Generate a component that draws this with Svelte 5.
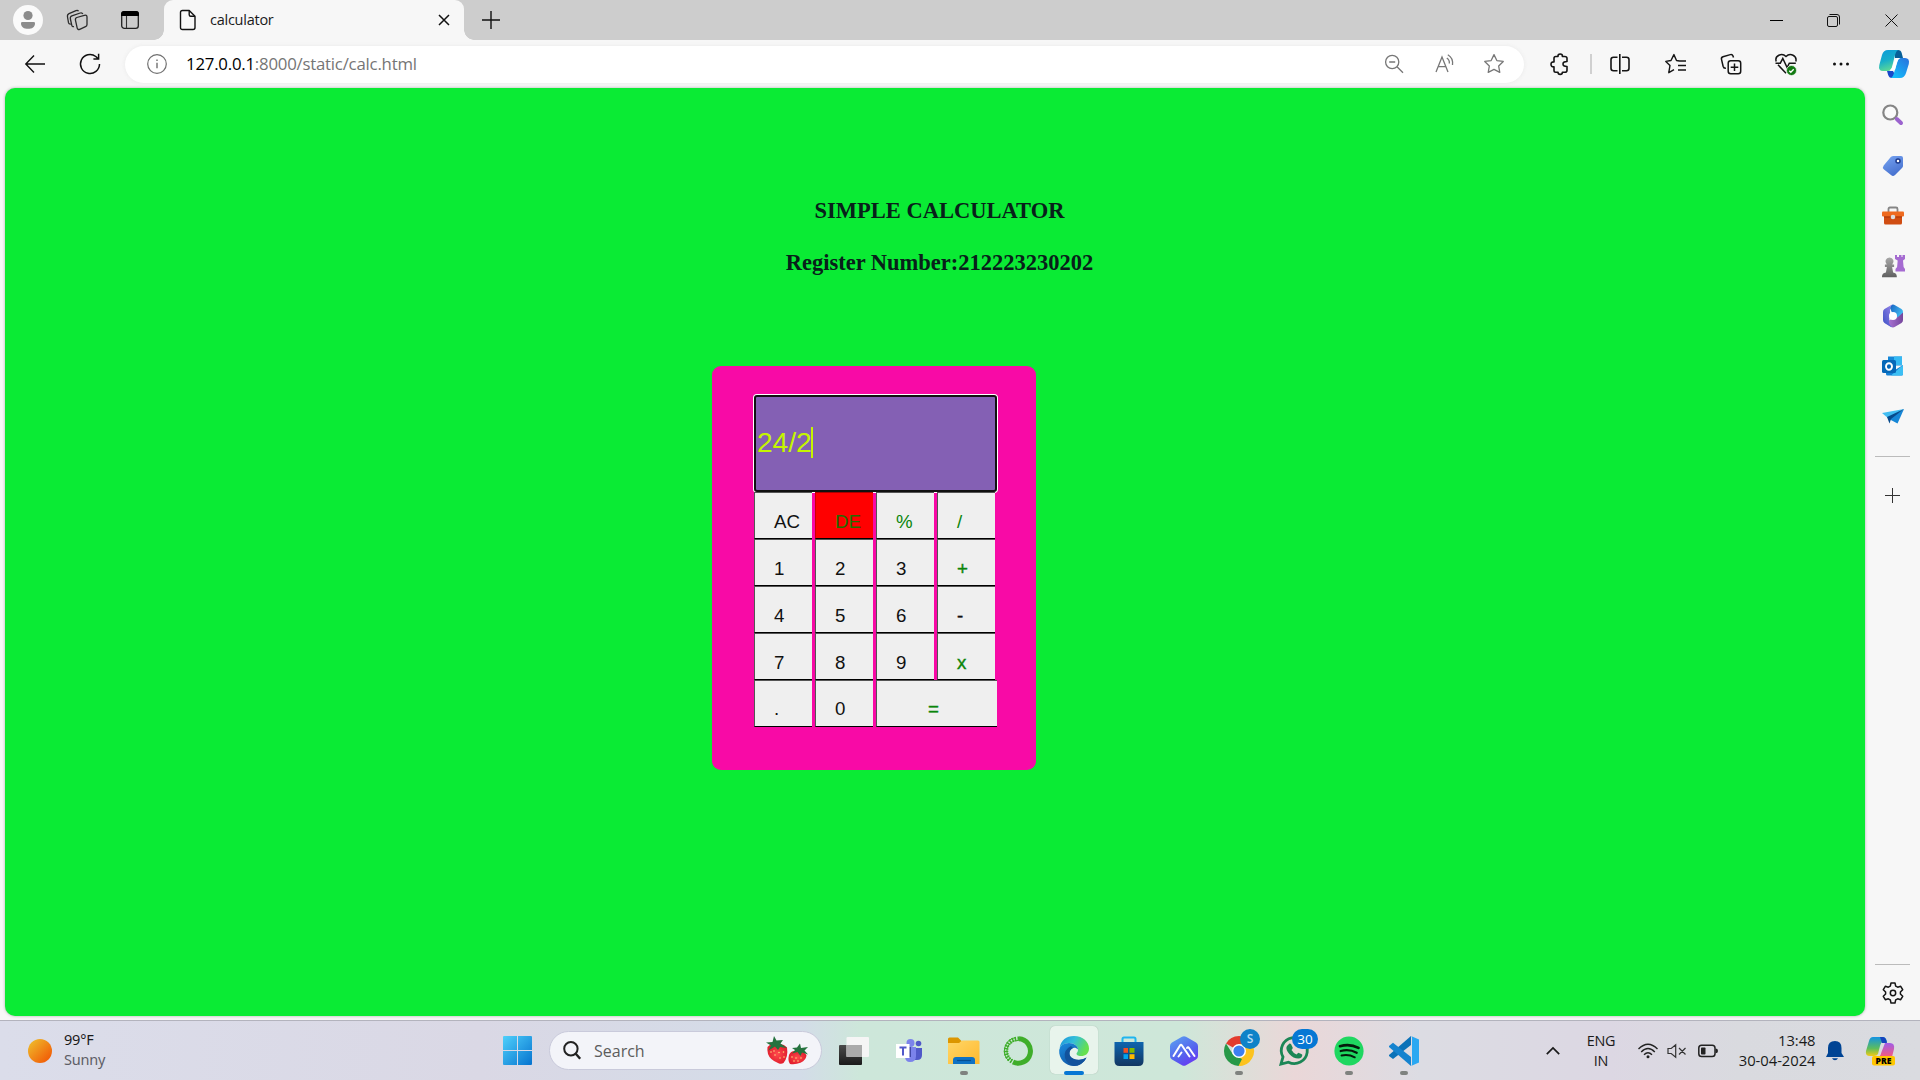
<script>
  const keys = [
    { t: 'AC' }, { t: 'DE', green: true, red: true }, { t: '%', green: true }, { t: '/', green: true },
    { t: '1' }, { t: '2' }, { t: '3' }, { t: '+', green: true, heavy: true },
    { t: '4' }, { t: '5' }, { t: '6' }, { t: '-', heavy: true },
    { t: '7' }, { t: '8' }, { t: '9' }, { t: 'x', green: true, heavy: true },
    { t: '.', last: true }, { t: '0', last: true }, { t: '=', green: true, wide: true, heavy: true, last: true }
  ];
</script>

<div class="screen">
  <header class="tabs">
    <div class="tools">
      <svg class="avatar" width="30" height="30" viewBox="0 0 30 30"><circle cx="15" cy="15" r="15" fill="#fafafa"/><circle cx="15" cy="10.5" r="4.6" fill="#8c8c8c"/><path d="M8 18.2q0-1.2 1.3-1.2h11.4q1.3 0 1.3 1.2c0 4-3 5.6-7 5.6s-7-1.600-7-5.600z" fill="#8c8c8c"/></svg>
      <svg width="24" height="24" viewBox="0 0 24 24" fill="none" stroke="#2b2b2b" stroke-width="1.3" stroke-linejoin="round"><path d="M10.800 9.500l7.500-2.200q2.500-.6 2.700 1.400v7.800q0 1.600-1.500 2.200l-5.800 2.600q-2 .7-2.500-1.200l-1.700-7.700q-.5-2.200 1.300-2.900z"/><path d="M8 18.600q-1.700.5-2.200-1.200L4.400 11q-.5-2.500 1.500-3.200l8.300-2.800q2-.6 2.600 1"/><path d="M4.800 16q-1.800.3-2.300-1.300L1.500 9q-.4-2.500 1.500-3.300l7-3q1.800-.7 2.500.6"/></svg>
      <svg width="18" height="18" viewBox="0 0 18 18"><rect x=".7" y=".7" width="16.600" height="16.600" rx="2.600" fill="none" stroke="#222" stroke-width="1.300"/><path d="M0 5V3q0-3 3-3h12q3 0 3 3v2z" fill="#000"/><path d="M5.500 5v12" stroke="#333" stroke-width="1.100"/></svg>
    </div>
    <div class="tab">
      <svg width="18" height="22" viewBox="0 0 18 22" fill="none" stroke="#111" stroke-width="1.400" stroke-linejoin="round"><path d="M3.500 1.500h6.700L16 7.300V18.500q0 2-2 2H3.500q-2 0-2-2v-15q0-2 2-2z"/><path d="M10.200 1.500v4.300q0 1.500 1.500 1.500H16"/></svg>
      <span>calculator</span>
      <svg class="x" width="12" height="12" viewBox="0 0 12 12" stroke="#111" stroke-width="1.500"><path d="M1 1l10 10M11 1L1 11"/></svg>
    </div>
    <svg class="new" width="18" height="18" viewBox="0 0 18 18" stroke="#111" stroke-width="1.400"><path d="M9 0v18M0 9h18"/></svg>
    <div class="win">
      <svg width="13" height="13" viewBox="0 0 13 13"><path d="M0 6.500h13" stroke="#000"/></svg>
      <svg width="13" height="13" viewBox="0 0 13 13" fill="none" stroke="#111"><rect x=".5" y="2.500" width="10" height="10" rx="1.500"/><path d="M2.500.5H10q2.500 0 2.500 2.500v7.500"/></svg>
      <svg width="13" height="13" viewBox="0 0 13 13" stroke="#111"><path d="M.5.5l12 12M12.500.5l-12 12"/></svg>
    </div>
  </header>

  <nav class="bar">
    <svg class="back" width="20" height="18" viewBox="0 0 20 18" fill="none" stroke="#111" stroke-width="1.400"><path d="M20 9H1M9 .5L.8 9 9 17.500"/></svg>
    <svg class="reload" width="22" height="22" viewBox="0 0 22 22" fill="none" stroke="#111" stroke-width="1.500"><path d="M20.500 11A9.500 9.500 0 1 1 16.800 3.500l2.400 2.300M19.600.8v5.200h-5.200"/></svg>
    <div class="address">
      <svg class="info" width="20" height="20" viewBox="0 0 20 20" fill="none" stroke="#707070" stroke-width="1.200"><circle cx="10" cy="10" r="9.300"/><path d="M10 8.800v5.400M10 5.600v1.500" stroke-width="1.400"/></svg>
      <p class="url"><b>127.0.0.1</b>:8000/static/calc.html</p>
      <div class="acts">
        <svg width="20" height="20" viewBox="0 0 20 20" fill="none" stroke="#777" stroke-width="1.300"><circle cx="8.200" cy="8" r="6.600"/><path d="M5.200 8h6M13 12.800l6 6"/></svg>
        <svg width="22" height="20" viewBox="0 0 22 20" fill="none" stroke="#777" stroke-width="1.300"><path d="M2 18L8 3l6 15M4.200 12.700h7.600M12.800 4q3 2 2.500 5.500M13.800.8q5.500 3 4.700 10.200"/></svg>
        <svg width="22" height="22" viewBox="0 0 24 24" fill="none" stroke="#777" stroke-width="1.400" stroke-linejoin="round"><path d="M12 1.800l3.100 6.400 7 1-5 5 1.200 7-6.300-3.300-6.300 3.300 1.200-7-5-5 7-1z"/></svg>
      </div>
    </div>
    <div class="right">
      <svg width="20" height="22" viewBox="0 0 20 22" fill="none" stroke="#151515" stroke-width="1.600" stroke-linejoin="round"><path d="M4 5.200q0-1.700 1.700-1.700H8q-.2-2.500 2.200-2.500t2.200 2.500h2.300q2.300 0 2.300 1.700v3.300q-4 0-4 2.500t4 2.500v3.700q0 2-2 2h-2.600q0 2.200-2.200 2.200T8 19.200H5.700Q4 19.200 4 17.500v-3.600q-3 .2-3-2.600 0-2.600 3-2.400z"/></svg>
      <i class="sep"></i>
      <svg width="20" height="20" viewBox="0 0 20 20" fill="none" stroke="#151515" stroke-width="1.600"><path d="M7.500 3.300h-4q-2.500 0-2.500 2.500v8.400q0 2.500 2.500 2.500h4M12 3.300h4.500q2.500 0 2.500 2.500v8.400q0 2.500-2.500 2.500H12M9.800 0v20"/></svg>
      <svg width="22" height="22" viewBox="0 0 22 22" fill="none" stroke="#151515" stroke-width="1.400" stroke-linejoin="round"><path d="M14.500 8l-3-.5L8.900 1.600 6 7.500l-5.200.9 4.200 4-1.200 7.300 5.200-3M13 8h8M13 12.500h8M13 17h8"/></svg>
      <svg width="22" height="22" viewBox="0 0 22 22" fill="none" stroke="#151515" stroke-width="1.500"><rect x="8.200" y="7.700" width="12.500" height="13" rx="2.500"/><path d="M14.500 10.500v7.500M10.700 14.200h7.600M13.500 4.500L13 3q-.7-2-2.700-1.400L3 3.700Q1 4.400 1.500 6.400l1.600 6.800q.6 2.300 2.800 1.900"/></svg>
      <svg width="24" height="24" viewBox="0 0 24 24" fill="none" stroke="#151515" stroke-width="1.500"><path d="M2.200 9.500C.4 3.800 7.800.2 12 4.500c4.200-4.300 11.300-.7 9.800 5M4 12.800l8 8.500M1.500 11.200h4.800l2.500-4.700 4.300 9 2.200-4.300h6.500"/><circle cx="17.500" cy="18.500" r="5" fill="#127a12" stroke="#f7f7f7" stroke-width=".7"/><path d="M15.300 18.700l1.500 1.500 2.900-3" stroke="#fff" stroke-width="1.300"/></svg>
      <svg width="18" height="6" viewBox="0 0 18 6" fill="#111"><circle cx="2.500" cy="3" r="1.500"/><circle cx="9" cy="3" r="1.500"/><circle cx="15.500" cy="3" r="1.500"/></svg>
      <svg class="cop" width="30" height="28" viewBox="0 0 30 28">
        <defs><linearGradient id="c1" x1="0" y1="0" x2=".3" y2="1"><stop offset="0" stop-color="#0c9bd9"/><stop offset=".55" stop-color="#18aeca"/><stop offset="1" stop-color="#58d69a"/></linearGradient><linearGradient id="c2" x1="1" y1="0" x2=".2" y2="1"><stop offset="0" stop-color="#2b70dc"/><stop offset="1" stop-color="#12bdfb"/></linearGradient></defs>
        <path d="M15 0h4q3 0 3.700 3l1.300 5h-8z" fill="#075f98"/><path d="M9 0h10q-2 1-3 5l-3 12q-1 4-4 4H4q-5 0-3.700-6L3 5q1.500-5 6-5z" fill="url(#c1)"/><path d="M8 21h6l4 7h-5q-3 0-4-3.500z" fill="#1748c9"/><path d="M21 28H12q2-1 3-5l3-11q1-4 4-4h4q5 0 3.800 6L27 23q-1.500 5-6 5z" fill="url(#c2)"/>
        <path d="M17 8h4q-2 1-3 5l-2 7h-5q2-1 3-5z" fill="#fff"/>
      </svg>
    </div>
  </nav>

  <div class="middle">
    <main class="page">
      <h3>SIMPLE CALCULATOR</h3>
      <h3>Register Number:212223230202</h3>
      <section class="calc">
        <div class="display"><span>24/2</span><i class="caret"></i></div>
        <div class="keys">
          {#each keys as k}
            <button class:green={k.green} class:red={k.red} class:wide={k.wide} class:heavy={k.heavy} class:last={k.last}>{k.t}</button>
          {/each}
        </div>
      </section>
    </main>

    <aside>
      <div><svg width="22" height="22" viewBox="0 0 22 22" fill="none"><circle cx="8.300" cy="8.500" r="7" fill="#fafafa" stroke="#858585" stroke-width="2.200"/><path d="M14.800 15l4.200 4" stroke="#9b63ce" stroke-width="4" stroke-linecap="round"/></svg></div>
      <div><svg width="22" height="22" viewBox="0 0 22 22"><defs><linearGradient id="tg" x1="0" y1="0" x2=".5" y2="1"><stop stop-color="#78a5f2"/><stop offset="1" stop-color="#4771cf"/></linearGradient></defs><path d="M11 1h8q2 0 2 2v8q0 1-1 2l-7 7q-2 2-4 0l-7-5.500q-2-2-.3-4L9 1.800z" fill="url(#tg)"/><circle cx="16" cy="6" r="2" fill="#fff" stroke="#1d3a8c" stroke-width="1.500"/></svg></div>
      <div><svg width="24" height="22" viewBox="0 0 24 22"><path d="M7.500 7V4q0-1.500 1.500-1.500h6q1.500 0 1.500 1.500v3" fill="none" stroke="#858585" stroke-width="1.800"/><path d="M3 9h18v9q0 1.500-1.500 1.500h-15Q3 19.500 3 18z" fill="#d04d12"/><rect x="1" y="6.500" width="22" height="5" rx="1" fill="#ef6a1f"/><path d="M3 12h18" stroke="#a83708"/><circle cx="12" cy="12" r="2.300" fill="#ddd"/></svg></div>
      <div><svg width="24" height="24" viewBox="0 0 24 24"><defs><linearGradient id="pw" x1="0" y1="0" x2="0" y2="1"><stop stop-color="#a8a8a8"/><stop offset="1" stop-color="#606060"/></linearGradient></defs><path d="M14 1h2v2h2V1h2.500v2h1V1H24v4l-2 1.500.6 6.500 1.400 2v2.500h-9.500V15l1.600-2 .6-6.500L14 5z" fill="#a56bd1"/><path d="M8.500 3.500a4 4 0 0 1 2.700 7h1.900V13h-2l1 5.500q3.700.5 3.700 4v.8H1v-.8q0-3.500 3.900-4l1-5.500h-2v-2.500h1.900a4 4 0 0 1 2.700-7z" fill="url(#pw)"/></svg></div>
      <div><svg width="22" height="24" viewBox="0 0 22 24"><defs><linearGradient id="m1" x1="0" y1="1" x2="1" y2="0"><stop stop-color="#3a50c4"/><stop offset="1" stop-color="#9a86ea"/></linearGradient><linearGradient id="m2" x1="0" y1="0" x2="1" y2=".6"><stop stop-color="#1460c0"/><stop offset="1" stop-color="#46c2f5"/></linearGradient><linearGradient id="m3" x1="0" y1="0" x2="1" y2="0"><stop stop-color="#b47be0"/><stop offset="1" stop-color="#75469c"/></linearGradient></defs><path d="M9 1.200q2-1.200 4 0L19.500 5Q21 6 21 8v8L11 11 8 4z" fill="url(#m2)"/><path d="M21 8.500V16q0 2-1.500 3L13 22.800q-2 1.200-4 0L3 19l8-5 5-1z" fill="url(#m3)"/><path d="M10.500.8Q8 2 8 5v4l-1 9q0 3 3.500 5.200-1 .2-2-.4L2.500 19Q1 18 1 16V8q0-2 1.500-3L9 1.200z" fill="url(#m1)"/><circle cx="11" cy="12" r="4" fill="#fff"/></svg></div>
      <div><svg width="22" height="22" viewBox="0 0 22 22"><path d="M6 1.500h14v9H6z" fill="#1487d8"/><path d="M12 1.500h8V10h-8z" fill="#35b9f3"/><path d="M4 10l9 5 8-5v9q0 1.500-1.500 1.500H5.500Q4 20.500 4 19z" fill="#1381d5"/><path d="M21 10L9 20.500h10.500q1.500 0 1.500-1.500z" fill="#3cbff4"/><rect x="0" y="5" width="14" height="13" rx="1.500" fill="#0768b8"/><ellipse cx="7" cy="11.500" rx="3" ry="3.300" fill="none" stroke="#fff" stroke-width="1.900"/></svg></div>
      <div><svg width="22" height="20" viewBox="0 0 22 20"><path d="M0 7L22 3 7 13z" fill="#42bdf2"/><path d="M22 3L7 13l8.500 4.500z" fill="#1686d6"/><path d="M5 11l2.500 6.500L9 13 22 3z" fill="#074a8c"/></svg></div>
      <hr class="first" />
      <div><svg width="15" height="15" viewBox="0 0 15 15" stroke="#333"><path d="M7.500 0v15M0 7.500h15"/></svg></div>
      <span class="grow"></span>
      <hr />
      <div class="gear"><svg width="22" height="22" viewBox="0 0 22 22" fill="none" stroke="#151515" stroke-width="1.500" stroke-linejoin="round"><path d="M9 1h4l.7 3.100 2 1.100 3-.9 2 3.400L18.400 10v2l2.300 2.300-2 3.400-3-.9-2 1.100L13 21H9l-.7-3.100-2-1.100-3 .9-2-3.400L3.600 12v-2L1.300 7.700l2-3.400 3 .9 2-1.100z"/><circle cx="11" cy="11" r="2.700"/></svg></div>
    </aside>
  </div>

  <footer>
    <div class="weather"><i class="sun"></i><p>99°F<br /><em>Sunny</em></p></div>
    <div class="slot"><svg width="29" height="29" viewBox="0 0 29 29"><defs><linearGradient id="w" x1="0" y1="0" x2="1" y2="1"><stop stop-color="#4fd0fb"/><stop offset="1" stop-color="#0673cf"/></linearGradient></defs><path d="M1 0h13v14H0V1q0-1 1-1zM15 0h13q1 0 1 1v13H15zM0 15h14v14H1q-1 0-1-1zM15 15h14v13q0 1-1 1H15z" fill="url(#w)"/></svg></div>
    <div class="search">
      <svg width="18" height="19" viewBox="0 0 18 19" fill="none" stroke="#222" stroke-width="2"><circle cx="7.900" cy="7.700" r="6.700"/><path d="M12.500 12.500l4.700 5.300" stroke-width="2.400"/></svg>
      <span>Search</span>
      <svg class="berry" width="42" height="29" viewBox="0 0 42 29">
        <defs><radialGradient id="br"><stop stop-color="#ff4a4c"/><stop offset="1" stop-color="#e3202f"/></radialGradient></defs>
        <path d="M1.500 11q3-4 9-2.500 7-1.500 10.500 3 1.500 9-3.500 15.500-2 1.500-5 .3Q4 24 2 18 1 14 1.500 11z" fill="url(#br)"/><path d="M23 19q2-5 8-3.800 7-.5 9.500 3.800 0 5-6 7.800-5 2-10.500 1.200Q21.500 25 23 19z" fill="url(#br)"/>
        <path d="M0 6.500l6.500-.5L8 0l2.500 4.500 6.500-.5-2.500 3.500 6.500 4.500-7-1-2 3-3-3.500-6.500 4 2.500-5zM26 12l5-.5 3-4 1 4.500 7-1-3.500 3.500 3.500 4-6-2-1.500 3.500-3-4-5.500 1.500 3-3.500z" fill="#25723e"/>
        <g fill="#ffd27a"><circle cx="5" cy="16" r=".8"/><circle cx="9" cy="19" r=".8"/><circle cx="13" cy="16.500" r=".8"/><circle cx="17.500" cy="16" r=".8"/><circle cx="14" cy="22" r=".8"/><circle cx="18" cy="21" r=".8"/><circle cx="8" cy="15" r=".8"/><circle cx="26" cy="21" r=".8"/><circle cx="30" cy="22" r=".8"/><circle cx="35" cy="22" r=".8"/><circle cx="28" cy="25" r=".8"/><circle cx="32" cy="25" r=".8"/></g>
      </svg>
    </div>
    <div class="slot"><svg width="30" height="28" viewBox="0 0 30 28"><defs><linearGradient id="tv" x1="0" y1="0" x2="0" y2="1"><stop stop-color="#4a4a4a"/><stop offset="1" stop-color="#1a1a1a"/></linearGradient></defs><rect x="0" y="8" width="23" height="20" rx="1" fill="url(#tv)"/><rect x="7.500" y="0" width="22.500" height="20" rx="1" fill="#f5f5f5"/><path d="M7.500 8H23v12H7.500z" fill="#aaa"/></svg></div>
    <div class="slot"><svg width="28" height="26" viewBox="0 0 28 26"><circle cx="15.500" cy="5" r="4" fill="#7b83eb"/><circle cx="23.500" cy="5.500" r="2.800" fill="#5059c9"/><path d="M19 10h8v7q0 5-5 5h-3z" fill="#5059c9"/><path d="M10 9h11v9q0 6-6 6-5 0-5-6z" fill="#7b83eb"/><path d="M10 9h6v10h-6z" fill="#4048a5"/><rect x="1" y="6" width="13.500" height="14" fill="#fff"/><path d="M4.500 9.500h7M8 9.500v8" stroke="#5059c9" stroke-width="2"/></svg></div>
    <div class="slot open"><svg width="32" height="28" viewBox="0 0 32 28"><defs><linearGradient id="fo" x1="0" y1="0" x2="1" y2="1"><stop stop-color="#ffd667"/><stop offset="1" stop-color="#ffb92e"/></linearGradient></defs><path d="M0 2q0-1.500 1.500-1.500H10L13.500 4H30v6H0z" fill="#dc9600"/><path d="M0 6h11l3-2.500h16q1.500 0 1.500 1.500v22H0z" fill="url(#fo)"/><path d="M5 27v-4q0-3 3-3h16q3 0 3 3v4z" fill="#0f72c4"/><path d="M9 23.500h14" stroke="#064f92" stroke-width="1.200"/></svg></div>
    <div class="slot"><svg width="30" height="30" viewBox="0 0 30 30" fill="none" stroke="#3fae2a"><path d="M15 2.800A12.200 12.200 0 1 1 9 26" stroke-width="5"/><path d="M15 2.800A12.200 12.200 0 0 0 9 26" stroke-width="4.500" stroke-dasharray="1.500 1.300"/><path d="M14 4.500A10.500 10.500 0 0 0 8 24M12 1.500A13.500 13.500 0 0 0 5 25" stroke-width="1"/></svg></div>
    <div class="slot active"><svg width="30" height="30" viewBox="0 0 30 30"><defs><linearGradient id="e1" x1="0" y1="0" x2="1" y2=".4"><stop stop-color="#1990dc"/><stop offset=".5" stop-color="#33bfd9"/><stop offset="1" stop-color="#65e04e"/></linearGradient><linearGradient id="e2" x1="0" y1="0" x2=".7" y2="1"><stop stop-color="#1c8de0"/><stop offset="1" stop-color="#0d4f9d"/></linearGradient></defs><path d="M.5 12Q3 0 15 0c9 0 15 6 15 12.500 0 5-3.500 7.500-8 7.500-3.500 0-4.500-1.500-4.500-2.300 0-1 1.500-1.500 1.500-4.200C19 10 15 7 10.500 7 5 7 1.500 10 .5 12z" fill="url(#e1)"/><path d="M.2 14Q1.500 7 10 7c5 0 9 3 9 6.500-4-4-9 0-8.500 4.500.5 5.500 8 8.500 17 3.500C25 27 20 30 15 30 6.500 30-.5 23 .2 14z" fill="url(#e2)"/><path d="M12 10Q4 14 6 22q2 6 9 8 8 0 12.500-8.500C20 26 11 23 10.500 18q-.3-4 3.500-6z" fill="#12529c"/></svg></div>
    <div class="slot"><svg width="30" height="30" viewBox="0 0 30 30"><defs><linearGradient id="st" x1="0" y1="0" x2="0" y2="1"><stop stop-color="#0f65af"/><stop offset="1" stop-color="#123661"/></linearGradient></defs><path d="M8.500 7V3q0-1.500 1.500-1.500h10q1.500 0 1.500 1.500v4" fill="none" stroke="#1fb5ef" stroke-width="2"/><path d="M.5 6h29v19q0 5-5 5h-19q-5 0-5-5z" fill="url(#st)"/><path d="M9.500 12H14v4.800H9.500z" fill="#f25022"/><path d="M15.500 12h5v4.800h-5z" fill="#7fba00"/><path d="M9.500 18.200H14V23H9.500z" fill="#00a4ef"/><path d="M15.500 18.200h5V23h-5z" fill="#ffb900"/></svg></div>
    <div class="slot"><svg width="28" height="30" viewBox="0 0 28 30"><defs><linearGradient id="am" x1=".2" y1="0" x2=".8" y2="1"><stop stop-color="#5b9cf0"/><stop offset=".6" stop-color="#5560ee"/><stop offset="1" stop-color="#6b35f3"/></linearGradient></defs><path d="M12 .8q2-1 4 0l10 5.700q2 1 2 3.500v10q0 2.500-2 3.500l-10 5.700q-2 1-4 0L2 23.500Q0 22.500 0 20V10q0-2.500 2-3.500z" fill="url(#am)"/><path d="M3.500 20l6.500-10.500q1-1.500 2 0l7.500 11M8.500 20.500l3-4M17 12q1-1.500 2 0l5.500 8" fill="none" stroke="#fff" stroke-width="2" stroke-linecap="round"/></svg></div>
    <div class="slot open"><svg width="30" height="30" viewBox="0 0 30 30"><path d="M15 15L2 7.500A15 15 0 0 1 28 7.500z" fill="#e33b2e"/><path d="M15 15H29a15 15 0 0 1-14 15l-2-1z" fill="#fcc31e"/><path d="M28 7.500a15 15 0 0 1-13 22.500L21 18.500 15 8z" fill="#fcc31e"/><path d="M2 7.500l7 11 9 4.500-3.500 7A15 15 0 0 1 2 7.500z" fill="#279847"/><circle cx="15" cy="15" r="7" fill="#fff"/><circle cx="15" cy="15" r="5.600" fill="#3d7ff0"/></svg><b class="badge s">S</b></div>
    <div class="slot"><svg width="30" height="30" viewBox="0 0 30 30"><path d="M2 28l2-7A13 13 0 1 1 9.500 26.200z" fill="none" stroke="#1c8656" stroke-width="2.800"/><path d="M9.500 8.500q1-1.500 2.500-.5l1.700 3.500q.2 1-1.200 2.500 2 3.500 5 4.500l1.800-1.800q4 1.400 4 2.300 0 3-4 3.600-5 0-9-4.500-3.500-4-2.800-7 .4-1.500 2-2.600z" fill="#1c8656"/></svg><b class="badge n">30</b></div>
    <div class="slot open"><svg width="30" height="30" viewBox="0 0 30 30"><circle cx="15" cy="15" r="14.600" fill="#1fd760"/><g fill="none" stroke="#05190b" stroke-linecap="round"><path d="M6 10.200q10-2.800 18.500 1.700" stroke-width="2.700"/><path d="M6.700 15q8.500-2.300 16 1.700" stroke-width="2.300"/><path d="M7.500 19.500q7-1.600 13.300 1.800" stroke-width="1.900"/></g></svg></div>
    <div class="slot open"><svg width="30" height="30" viewBox="0 0 30 30"><path d="M22 0v9L4 23l-4-3v-1z" fill="#0b72b8"/><path d="M0 11V10l4-3.300L22 21v9z" fill="#1583cf"/><path d="M22 0l8 3.500v23L22 30q1-.5 1-2V2q0-1.500-1-2z" fill="#2aa8f2"/></svg></div>

    <div class="tray">
      <svg width="14" height="8" viewBox="0 0 14 8" fill="none" stroke="#1a1a1a" stroke-width="1.700"><path d="M.8 7.200L7 1l6.200 6.200"/></svg>
      <p class="lang">ENG<br />IN</p>
      <svg width="22" height="16" viewBox="0 0 22 16" fill="none" stroke="#222" stroke-width="1.400"><path d="M1.500 6q9.500-9.500 19 0M4.200 9q6.800-7 13.600 0M7 11.700q4-4 8 0"/><circle cx="11" cy="13.700" r="1.500" fill="#222" stroke="none"/></svg>
      <svg width="20" height="14" viewBox="0 0 20 14" fill="none" stroke="#333" stroke-width="1.200"><path d="M1 4.500h3.200L8.700.8v12.400L4.200 9.500H1zM12 4l6.500 6.500M18.500 4L12 10.500"/></svg>
      <svg width="20" height="14" viewBox="0 0 20 14"><rect x=".8" y="1.200" width="16.200" height="11.400" rx="2.800" fill="none" stroke="#222" stroke-width="1.500"/><rect x="3" y="3.500" width="4.500" height="7" rx=".8" fill="#222"/><path d="M17.500 4.500q2.500 0 2.500 2.400t-2.500 2.400z" fill="#222"/></svg>
      <p class="clock">13:48<br />30-04-2024</p>
      <svg width="18" height="20" viewBox="0 0 18 20" fill="#004494"><path d="M9 0q6.500 0 6.500 7v5L18 16H0l2-4V7Q2 0 9 0zM6 17.300h6q-1 2-3 2t-3-2z"/></svg>
      <svg width="30" height="30" viewBox="0 0 30 30"><defs><linearGradient id="p1" x1="0" y1="0" x2="0" y2="1"><stop stop-color="#1393e3"/><stop offset=".6" stop-color="#5dbd5d"/><stop offset="1" stop-color="#f2cb16"/></linearGradient><linearGradient id="p2" x1="0" y1="0" x2="0" y2="1"><stop stop-color="#a05ce8"/><stop offset="1" stop-color="#f75b7c"/></linearGradient></defs><path d="M8 1h10q3 0 4 5h-4q-2 0-3 4l-2 8q-1 2-4 2H5q-5 0-4-5L4 5q1-4 4-4z" fill="url(#p1)"/><path d="M15 1h3q3 0 4 6h-5z" fill="#1644bd"/><path d="M20 7h5q5 0 4 6l-2 8H14q2-2 2.500-5z" fill="url(#p2)"/><rect x="7" y="20" width="23" height="9.500" rx="2" fill="#ffc600"/><text x="18.500" y="28" text-anchor="middle" class="pre">PRE</text></svg>
    </div>
  </footer>
</div>

<style>
  :global(body) { margin: 0; overflow: hidden; }
  .screen { width: 1920px; height: 1080px; display: flex; flex-direction: column; overflow: hidden; background: #f7f7f7; font-family: 'Open Sans', 'Noto Sans', sans-serif; color: #1a1a1a; }
  p, h3 { margin: 0; }
  svg { display: block; flex: none; overflow: visible; }

  .tabs { height: 40px; background: #cdcdcd; display: flex; align-items: center; }
  .tools { width: 164px; display: flex; align-items: center; padding-left: 13px; box-sizing: border-box; }
  .tools svg:nth-child(2) { margin-left: 23px; }
  .tools svg:nth-child(3) { margin-left: 31px; }
  .tab { position: relative; width: 300px; height: 40px; box-sizing: border-box; padding: 0 14px 0 15px; display: flex; align-items: center; background: #f7f7f7; border-radius: 9px 9px 0 0; font-size: 14.5px; letter-spacing: -.25px; }
  .tab::before, .tab::after { content: ''; position: absolute; bottom: 0; width: 10px; height: 10px; }
  .tab::before { left: -10px; background: radial-gradient(circle at 0 0, #cdcdcd 9.5px, #f7f7f7 10px); }
  .tab::after { right: -10px; background: radial-gradient(circle at 100% 0, #cdcdcd 9.5px, #f7f7f7 10px); }
  .tab span { margin-left: 13px; padding-bottom: 2px; }
  .x { margin-left: auto; }
  .new { margin-left: 17.5px; }
  .win { margin-left: auto; display: grid; grid-template-columns: 57px 57px 58px; justify-items: center; }

  .bar { height: 48px; display: flex; align-items: center; }
  .back { margin-left: 25px; }
  .reload { margin: 0 24px 0 34px; }
  .address { width: 1399px; flex: none; height: 37px; box-sizing: border-box; border-radius: 19px; background: #fff; display: flex; align-items: center; padding: 0 7px 0 22px; box-shadow: 0 0 4px #e9e9e9; }
  .info { margin-right: 19px; }
  .url { font-size: 16.8px; letter-spacing: -.22px; padding-bottom: 2px; color: #757575; white-space: nowrap; }
  .url b { font-weight: 400; color: #000; }
  .acts { margin-left: auto; display: grid; grid-template-columns: 50px 51px 47px; place-items: center; }
  .right { margin-left: 8px; display: grid; grid-template-columns: 56px 6px 52px 60px 49px 62px 48px 58px; place-items: center; flex: none; }
  .sep { width: 2px; height: 20px; background: #d0d0d0; }

  .middle { height: 932px; display: flex; padding-left: 5px; box-sizing: border-box; }
  .page { width: 1860px; height: 928px; box-sizing: border-box; border-radius: 10px; background: #0aeb34; padding-top: 109px; box-shadow: 0 0 3px #aaa; }
  h3 { font: bold 22.5px/27px 'Liberation Serif', serif; text-align: center; padding-left: 9px; color: #08201a; }
  h3 + h3 { margin-top: 25px; }
  .calc { width: 324px; height: 404px; box-sizing: border-box; margin: 90px 0 0 707px; padding: 29px 39px 0 42px; background: #f80aa6; border-radius: 9px; }
  .display { height: 97px; box-sizing: border-box; border: 2px solid #101010; border-radius: 3px; box-shadow: 0 0 0 1px #fff; background: #8460b4; color: #c5f500; font: 28.100px/32px 'Liberation Sans', sans-serif; display: flex; align-items: center; padding: 0 0 2px 1px; }
  .caret { width: 2px; height: 31px; margin-left: -1px; background: #c5f500; }
  .keys { display: grid; grid-template-columns: repeat(3, 58px) 60px; grid-auto-rows: 47px; column-gap: 3px; }
  button { width: 58px; height: 47px; box-sizing: border-box; margin: 0; padding: 12px 0 0 19px; border: solid #555; border-width: 1px 0 1px 1px; border-bottom-color: #000; border-radius: 0; background: #efefef; color: #111; font: 18.7px/22px 'Liberation Sans', sans-serif; text-align: left; }
  .last { padding-top: 10px; }
  .green { color: #0a850a; }
  .heavy { -webkit-text-stroke: .4px currentColor; }
  .red { background: #f00; border-top-color: #a00; border-left-color: #c00; color: #226e00; }
  .wide { grid-column: span 2; width: 121px; padding-left: 51px; }

  aside { width: 55px; display: flex; flex-direction: column; padding-top: 2px; box-sizing: border-box; }
  aside div { height: 50px; display: flex; align-items: center; justify-content: center; }
  aside div:nth-child(n + 2):nth-child(-n + 7) { padding-top: 2px; height: 48px; margin-bottom: 0; }
  hr { width: 35px; height: 1px; border: 0; margin: 0 auto; background: #bbb; }
  .first { margin-top: 16px; margin-bottom: 13px; }
  .grow { flex: 1; }
  aside .gear { height: 55px; }

  footer { height: 60px; box-sizing: border-box; border-top: 1px solid #b3b3bd; display: flex; align-items: center; background: linear-gradient(90deg, #dbddea 0, #dad8e5 480px, #d3dce8 800px, #cde7da 860px, #cee7d9 1180px, #ead7d8 1295px, #dcdce3 1420px, #dcd7e3 1610px, #d9dadf 1740px, #dadbe0 1920px); }
  .weather { width: 490px; box-sizing: border-box; padding-left: 28px; display: flex; align-items: center; gap: 12px; font: 14.5px/20px 'Noto Sans', sans-serif; letter-spacing: -.2px; }
  .weather p { padding-bottom: 4px; }
  .weather em { font-style: normal; color: #5e5e66; }
  .sun { width: 24px; height: 24px; border-radius: 50%; background: linear-gradient(135deg, #efc42f, #f1650a 80%); }
  .slot { position: relative; width: 55px; height: 59px; display: flex; align-items: center; justify-content: center; }
  .slot svg { position: relative; }
  .search { width: 273px; height: 39px; box-sizing: border-box; margin: 0 4px; border-radius: 20px; border: 1px solid #c9cadb; background: #f3f4f9; display: flex; align-items: center; padding: 0 13px 0 13px; font-size: 16px; color: #5c5c5c; }
  .search span { margin-left: 13px; }
  .berry { margin-left: auto; }
  .open::after, .active::after { content: ''; position: absolute; bottom: 5px; width: 8px; height: 4px; border-radius: 2px; background: #7f827f; }
  .active::before { content: ''; position: absolute; inset: 5px 3px 6px 4px; border-radius: 5px; background: #e8f4ec; box-shadow: 0 0 1px #9aaba0; }
  .active::after { width: 20px; background: #0677d4; }
  .badge { position: absolute; font-weight: 400; color: #fff; text-align: center; background: #0677d4; }
  .s { width: 20px; height: 20px; left: 29px; top: 8px; border-radius: 50%; font: 600 12px/19px 'Open Sans', sans-serif; color: #b8dcf5; background: #0e82c8; }
  .n { width: 26px; height: 20px; left: 26px; top: 8px; border-radius: 10px; font-size: 13.5px; line-height: 20px; }
  .tray { margin-left: auto; display: grid; grid-template-columns: 54px 42px 12px 28px 30px 32px 91.500px 39px 51px; width: 394px; justify-items: center; align-items: center; font-size: 14.4px; line-height: 20px; }
  .tray > svg:nth-child(3) { grid-column: 4; }
  .lang { text-align: center; letter-spacing: -.2px; }
  .clock { justify-self: end; text-align: right; font-size: 14.8px; letter-spacing: -.05px; padding-bottom: 2px; }
  .pre { font: 800 8.500px 'Open Sans', sans-serif; fill: #000; }
</style>
